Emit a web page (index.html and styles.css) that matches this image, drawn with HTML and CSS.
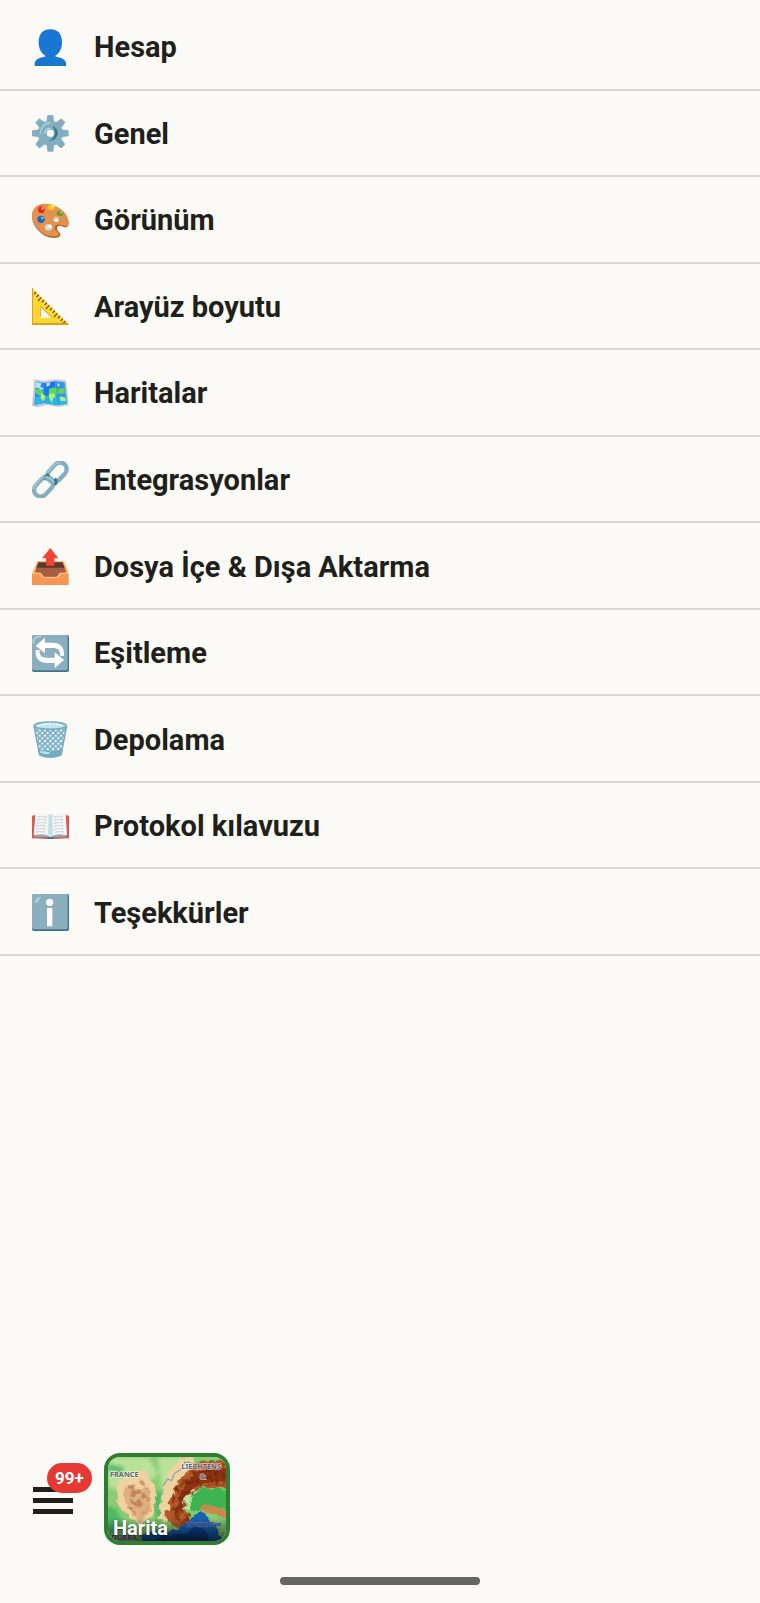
FILE: index.html
```
<!DOCTYPE html><html lang="tr"><head><meta charset="utf-8"><meta name="viewport" content="width=device-width">
<title>Ayarlar</title>
<link rel="stylesheet" href="styles.css">
</head>
<body>

<main>
<ul id="settings">
	<li><a href="#hesap">
		<svg class="icon" viewBox="0 0 111 111"><path fill="#1976d2" d="M55 1C31 1 20 17 20 40c0 21 9 34 21 41-4 4-12 4-18 6-9 3-15 9-15 16v8h94v-8c0-7-6-13-15-16-6-2-14-2-18-6 12-7 21-20 21-41C90 17 79 1 55 1z"/></svg>
		<span>Hesap</span></a></li>
	<li><a href="#genel">
		<svg class="icon" viewBox="0 0 111 111">
			<g fill="#82aec0">
				<path id="tooth" d="M43 24L46 2q0-2 2-2h14q2 0 2 2l3 22z"/>
				<use href="#tooth" transform="rotate(45 55 55)"/>
				<use href="#tooth" transform="rotate(90 55 55)"/>
				<use href="#tooth" transform="rotate(135 55 55)"/>
				<use href="#tooth" transform="rotate(180 55 55)"/>
				<use href="#tooth" transform="rotate(225 55 55)"/>
				<use href="#tooth" transform="rotate(270 55 55)"/>
				<use href="#tooth" transform="rotate(315 55 55)"/>
			</g>
			<circle cx="55" cy="55" r="24" fill="none" stroke="#82aec0" stroke-width="27"/>
			<path d="M25 56c0-18 11-31 29-32" fill="none" stroke="#a9d3de" stroke-width="4" stroke-linecap="round"/>
			<path d="M62 33c25 11 18 46-13 44 17-3 27-22 13-44z" fill="#2f7889"/>
			<path d="M39 55c0-8 6-15 15-15" fill="none" stroke="#b9e4ea" stroke-width="4" stroke-linecap="round"/>
			<circle cx="55" cy="55" r="10" fill="#fbfaf6"/>
		</svg>
		<span>Genel</span></a></li>
	<li><a href="#gorunum">
		<svg class="icon" viewBox="0 0 111 111">
			<path fill="#b06328" d="M38 7C14 7 0 22 0 43c0 30 32 65 65 65 12 0 21-3 20-11-1-6-11-10-10-18 1-9 10-9 18-5 11 5 17 0 17-10C110 34 74 7 38 7z"/>
			<path fill="#e2924f" d="M38 5C15 5 0 20 0 40c0 30 32 63 62 63 11 0 20-2 19-8-1-5-14-9-13-19 1-10 12-10 20-7 13 6 22 5 22-7C110 32 74 5 38 5z"/>
			<circle cx="73" cy="52" r="8" fill="#fbfaf6"/><path d="M66 51q8-8 15 1" fill="none" stroke="#b06328" stroke-width="2"/>
			<circle cx="28" cy="23" r="10" fill="#e8291c"/><circle cx="32" cy="19" r="4" fill="#ff9b91"/>
			<ellipse cx="58" cy="16" rx="11" ry="9" fill="#fcc21b"/><circle cx="62" cy="13" r="4" fill="#fff48a"/>
			<ellipse cx="84" cy="34" rx="10" ry="8" fill="#659c35"/><circle cx="88" cy="31" r="3" fill="#bddb87"/>
			<circle cx="27" cy="52" r="11" fill="#1769c2"/><circle cx="31" cy="48" r="4" fill="#80baff"/>
			<ellipse cx="50" cy="76" rx="11" ry="10" fill="#dad7d4"/><circle cx="54" cy="73" r="5" fill="#fff"/>
		</svg>
		<span>Görünüm</span></a></li>
	<li><a href="#boyut">
		<svg class="icon" viewBox="0 0 111 111">
			<path fill="#fdd835" fill-rule="evenodd" d="M0 0l110 107v4H0zM24 57v32h34z"/>
			<path fill="#e0a21c" d="M0 105h108l2 6H0zM0 0h3v107H0z"/>
			<path fill="none" stroke="#e0a21c" stroke-width="3" d="M25 87V58M25 54l34 33"/>
			<path fill="none" stroke="#6b5540" stroke-width="4" d="M12 12l-6 7M20 20l-6 7M28 28L18 39M36 36l-6 7M44 44l-6 7M52 52L42 63M60 60l-6 7M68 68l-6 7M76 76L66 87M84 84l-6 7M92 92l-6 7M100 100l-6 6"/>
		</svg>
		<span>Arayüz boyutu</span></a></li>
	<li><a href="#haritalar">
		<svg class="icon" viewBox="0 0 111 111">
			<path fill="#c4cbd0" d="M7 13l30 5 32-5 33 3 8 75-33 5-32-6-29 7-16-4z"/>
			<path fill="#258bf0" d="M12 20l24 4 1 60-30 6z"/>
			<path fill="#1976e8" d="M36 24l33-5 8 71-40-6z"/>
			<path fill="#3596ef" d="M69 19l29 3 7 64-28 4z"/>
			<path fill="#27b8e8" d="M9 66l28-4 38 2 27 5 3 17-28 4-40-6-30 6z"/>
			<path fill="#bfe3fc" d="M12 22l16 3-3 11 12 5-9 4-10-7-8 2zM42 24l13-2-2 9-9 5zM75 24l8 4-3 7-5-3z"/>
			<path fill="#5cd65c" d="M10 41l18 2 7 8-12 11-13-9zM51 43l14-6 12 4 20-2 2 16-16 1-12 4-21-4z"/>
			<path fill="#b9f26a" d="M27 54l10 5 6 7-9 13-8-10zM50 58l15-3 7 9-8 5-5 14-7-14zM84 64l16 4 1 11-16-2z"/>
			<path fill="#2d7bd1" opacity=".3" d="M36 24l8-1v62l-7-1zM69 19l8 1 7 69-7 1z"/>
		</svg>
		<span>Haritalar</span></a></li>
	<li><a href="#entegrasyon">
		<svg class="icon" viewBox="0 0 111 111">
			<g fill="none" stroke-width="13">
				<rect x="42" y="14" width="66" height="40" rx="20" transform="rotate(-47 75 34)" stroke="#82aec0"/>
				<rect x="2" y="57" width="66" height="40" rx="20" transform="rotate(-47 35 77)" stroke="#82aec0"/>
				<path d="M43 57q-3-10 5-19" stroke="#2f7889"/>
				<path d="M67 54q6 7 0 17" stroke="#2f7889"/>
				<path d="M40 45q2 7 11 10 9 4 13 14" stroke="#82aec0"/>
			</g>
			<path d="M40 40l22-25q10-10 22-10M4 83q1-7 8-14l18-20M46 49q13 3 18 13" fill="none" stroke="#a8cbd7" stroke-width="4" stroke-linecap="round"/>
		</svg>
		<span>Entegrasyonlar</span></a></li>
	<li><a href="#dosya">
		<svg class="icon" viewBox="0 0 111 111">
			<path fill="#ffb468" d="M16 39h80l14 37H0z"/>
			<path fill="#5d3830" d="M19 43h73l7 19H12z"/>
			<path fill="#a65f3e" d="M14 59h84l5 14 -20 2-8 12H35l-8-12-19-2z"/>
			<path fill="#f79653" d="M0 75h26l7 12h45l7-12h25v36H0z"/>
			<path fill="none" stroke="#ffc58a" stroke-width="3" d="M0 76h25l7 12h47l7-12h24"/>
			<path fill="#f44336" d="M55 0l24 31H67v22H42V31H30z"/>
		</svg>
		<span>Dosya İçe &amp; Dışa Aktarma</span></a></li>
	<li><a href="#esitleme">
		<svg class="icon" viewBox="0 0 111 111">
			<rect width="111" height="111" rx="6" fill="#427687"/>
			<rect width="107" height="106" rx="6" fill="#8cafbf"/>
			<path d="M4 24Q4 5 24 4" fill="none" stroke="#b5d2dd" stroke-width="5" stroke-linecap="round"/>
			<path fill="#fff" d="M11 32L39 8v15h23c21 0 33 12 34 30v9H84v-6c0-12-9-17-21-17H39v16z"/>
			<path fill="#fff" d="M96 75L68 99V84H45C24 84 12 72 11 54v-9h12v6c0 12 9 17 21 17h24V52z"/>
		</svg>
		<span>Eşitleme</span></a></li>
	<li><a href="#depolama">
		<svg class="icon" viewBox="0 0 111 111">
			<defs><pattern id="mesh" width="16" height="16" patternUnits="userSpaceOnUse" patternTransform="translate(7 4)">
				<path d="M0 0l16 16M16 0L0 16" stroke="#78adc2" stroke-width="5"/>
			</pattern></defs>
			<path fill="#f1f8fa" d="M5 14h100L88 103q-33 15-65 0z"/>
			<path fill="url(#mesh)" d="M5 14h100L88 103q-33 15-65 0z"/>
			<path fill="#73abc1" d="M20 85q35 12 71 0l-4 19q-32 13-64 0z"/>
			<path fill="#b9e4ea" d="M24 88q15 6 28 5v6q-15 1-27-4z"/>
			<path d="M6 15l17 88M104 15l-17 88" stroke="#73abc1" stroke-width="4"/>
			<ellipse cx="55" cy="14" rx="48" ry="11" fill="#c6e3ec" stroke="#73abc1" stroke-width="5"/>
			<path d="M18 15q37-14 74 0" fill="none" stroke="#eaf8fb" stroke-width="5" stroke-dasharray="7 4"/>
		</svg>
		<span>Depolama</span></a></li>
	<li><a href="#kilavuz">
		<svg class="icon" viewBox="0 0 111 111">
			<path fill="#d95757" d="M0 23l10-2h91l10 2v68l-48 2H48L0 91z"/>
			<path fill="#3e6672" d="M45 86h22l-4 7H48z"/>
			<path fill="#82aec0" d="M7 82l41-3 7 10 8-10 40 3v6l-38-1-9 3-10-3-39 1z"/>
			<path fill="#f3f6f6" d="M10 19q31-6 45 2 14-8 46-2l4 63q-33-7-50 4Q38 75 5 82z"/>
			<path fill="#c3e0e7" d="M50 18q4 0 5 4 2-4 6-4l2 61q-5 1-8 7-3-5-7-7z"/>
			<path fill="none" stroke="#a8aaa9" stroke-width="2" stroke-dasharray="8 2 5 3" d="M17 27q16-3 29 1M16 36q16-3 29 1M15 45q16-3 29 1M14 54q16-3 29 1M13 63q16-3 29 1M12 72q16-3 29 1M66 28q14-4 28-1M67 37q14-4 28-1M67 46q14-4 28-1M68 55q14-4 28-1M68 64q14-4 28-1M69 73q14-4 28-1"/>
		</svg>
		<span>Protokol kılavuzu</span></a></li>
	<li><a href="#tesekkur">
		<svg class="icon" viewBox="0 0 111 111">
			<rect width="111" height="111" rx="6" fill="#427687"/>
			<rect width="107" height="106" rx="6" fill="#8cafbf"/>
			<path d="M9 26Q10 11 27 8L14 28z" fill="#b5d2dd"/>
			<circle cx="53" cy="25" r="11" fill="#fff"/>
			<rect x="45" y="42" width="16" height="55" rx="2" fill="#fff"/>
		</svg>
		<span>Teşekkürler</span></a></li>
</ul>
</main>

<nav>
	<button id="menu" aria-label="Menü">
		<span class="bar"></span><span class="bar"></span><span class="bar"></span>
		<span class="badge">99+</span>
	</button>
	<button id="map">
		<svg viewBox="0 0 354 252" preserveAspectRatio="xMidYMid slice">
			<defs>
				<filter id="rough" x="-10%" y="-10%" width="120%" height="120%" color-interpolation-filters="sRGB">
					<feTurbulence type="fractalNoise" baseFrequency=".05" numOctaves="3" seed="8"/>
					<feDisplacementMap in="SourceGraphic" scale="22" xChannelSelector="R" yChannelSelector="G"/>
					<feGaussianBlur stdDeviation="2"/>
				</filter>
				<filter id="relief" x="0" y="0" width="100%" height="100%" color-interpolation-filters="sRGB">
					<feTurbulence type="fractalNoise" baseFrequency=".06" numOctaves="3" seed="4"/>
					<feColorMatrix values="0 0 0 0 .45  0 0 0 0 .13  0 0 0 0 .02  5 0 0 0 -2.3"/>
					<feComposite in2="SourceGraphic" operator="in"/>
				</filter>
				<filter id="soft"><feGaussianBlur stdDeviation="6"/></filter>
				<linearGradient id="shade" x2="0" y2="1"><stop offset=".72" stop-opacity="0"/><stop offset="1" stop-opacity=".65"/></linearGradient>
			</defs>
			<rect width="354" height="252" fill="#8acd72"/>
			<g filter="url(#soft)">
				<path fill="#b9e29b" d="M0 0h120l30 50-40 40-70 10L0 90zM150 0h80l-50 110-20-20z"/>
				<path fill="#4db765" d="M-10 145l35 10 30 60-60 20zM138 110l22-10 5 80-20 20zM0 20l50 10-10 20-40-10z"/>
			</g>
			<g filter="url(#rough)">
				<path fill="#f0d2a0" d="M25 75l80-38 38 50-6 90-40 28-65-55zM185 40l30-40h40l-10 60-50 60-20 70-24-5 10-70z"/>
				<path fill="#e2b080" d="M55 96l20-8 12 12 22-12 16 22-5 20 10 22-20 28-10 20-20-18-8-20-20-12 6-14-16-14z"/>
				<path fill="#b25a2a" d="M218 65l26-28 20-22 100-5v86l-50-6-30 2-35 12-20 35 5 30 15 22-30 22-30-10-20-28 16-22-6-16 20-22-4-20z"/>
				<path fill="#8e3416" d="M250 60l50-30 60 4v40l-50 2-50 14-30 36-8 46-18-18 16-50z"/>
				<path fill="#3eb352" d="M240 122l30-24 50-5 44 8v60l-56-13-25 10-35 4z"/>
				<path fill="#c1e4a0" d="M225 130l20-26 26-10-20 26-6 25 8 16-26-8z"/>
				<path fill="#c98a50" d="M272 152l30-10 62 22v30l-40-22-35-6z"/>
				<path fill="#1862b4" d="M250 186l14-20 18 0 24 20 28 32 8 50H95l5-35 40-12 50 0 30-10 20-20z"/>
				<path fill="#0b428f" d="M120 270l40-32 80-12 25-20 20 10 20 30v30z"/>
				<path fill="#7fc779" d="M328 175l40 10v45l-22-20z"/>
			</g>
			<path filter="url(#relief)" opacity=".3" d="M50 90l50-25 30 40-5 60-35 20-35-40z"/>
			<path filter="url(#relief)" opacity=".7" d="M195 100l50-60 30-30h89v76l-80 0-35 35-5 40 10 25-35 20-30-20z"/>
			<path fill="none" stroke="#5999b8" stroke-width="3" d="M165 88l14-22 12 5 8-22 22-12 9-22 24 4"/>
			<g class="places">
				<text x="6" y="61">FRANCE</text>
				<text x="220" y="36">LIECHTENS</text>
				<text x="275" y="67">&amp;</text>
				<text class="sea" x="233" y="208">Ligurian Sea</text>
				<text x="10" y="250">DORRA</text>
			</g>
			<rect width="354" height="252" fill="url(#shade)"/>
		</svg>
		<span class="name">Harita</span>
	</button>
</nav>
<div id="home"></div>

</body>
</html>
```
FILE: styles.css
```
* {
	box-sizing: border-box;
}
body {
	display: flex;
	flex-direction: column;
	min-height: 100vh;
	margin: 0px;
	background: #fbfaf6;
	color: #1f1f1b;
	font-family: Roboto, sans-serif;
}
#settings {
	display: grid;
	grid-auto-rows: 1fr;
	height: 956px;
	margin: 0px;
	padding: 4px 0 0;
	list-style: none;
}
#settings li {
	border-bottom: 2px solid #d9d9d1;
}
#settings a {
	display: flex;
	align-items: center;
	gap: 25px;
	height: 100%;
	padding: 2px 32px 0;
	color: inherit;
	font-size: 29px;
	font-weight: bold;
	text-decoration: none;
}
.icon {
	flex: none;
	width: 37px;
	height: 37px;
}

/* bottom bar */
nav {
	display: flex;
	align-items: center;
	gap: 31px;
	margin-top: auto;
	padding: 0 33px;
}
button {
	position: relative;
	padding: 0;
	border: none;
	background: none;
	color: inherit;
	font-family: inherit;
}
#menu {
	display: flex;
	flex-direction: column;
	gap: 6px;
	width: 40px;
	margin-top: 2px;
}
.bar {
	height: 5px;
	background: #1f1f1b;
}
.badge {
	position: absolute;
	left: 14px;
	top: -24px;
	padding: 0 8px;
	border-radius: 15px;
	background: #e53935;
	color: white;
	font-size: 17px;
	font-weight: bold;
	line-height: 30px;
}
#map {
	overflow: hidden;
	width: 126px;
	height: 92px;
	border: 4px solid #2e7d32;
	border-radius: 16px;
}
#map svg {
	display: block;
	width: 100%;
	height: 100%;
}
.name {
	position: absolute;
	left: 5px;
	bottom: 1px;
	color: white;
	font-size: 20px;
	font-weight: bold;
	line-height: 24px;
	text-shadow: 0 1px 2px #0008;
}
.places {
	fill: #666270;
	stroke: #fffa;
	stroke-width: 4px;
	paint-order: stroke;
	font-family: "Noto Sans", sans-serif;
	font-size: 22px;
	font-weight: bold;
}
.places .sea {
	fill: #3d3dae;
	stroke: #8ab8;
	font-size: 18px;
	font-style: italic;
}
#home {
	width: 200px;
	height: 8px;
	margin: 32px auto 18px;
	border-radius: 4px;
	background: #666661;
}
```
